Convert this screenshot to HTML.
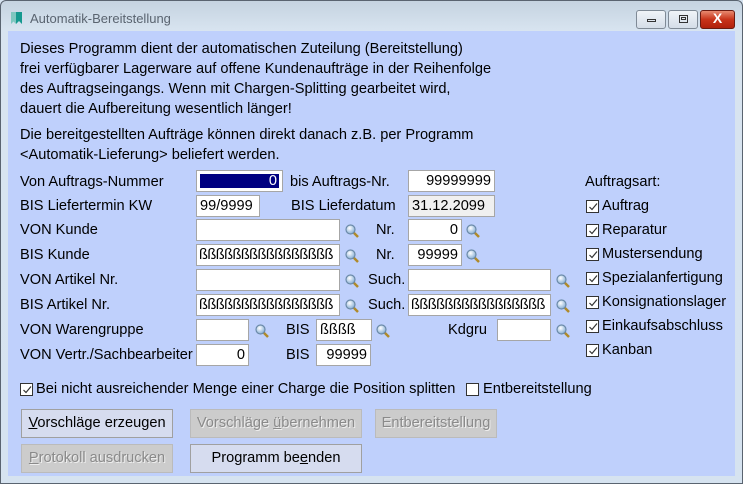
<!DOCTYPE html>
<html><head><meta charset="utf-8"><style>
*{box-sizing:border-box;margin:0;padding:0}
body{width:743px;height:484px;position:relative;overflow:hidden;background:#d6e3f0;font-family:"Liberation Sans",Arial,sans-serif;font-size:14.6px;color:#000}
.frame{position:absolute;left:0;top:0;width:743px;height:484px;border:1px solid #5a6470;border-radius:6px 6px 0 0;background:linear-gradient(#c5d3e0,#d8e4f0 30px,#d6e3f0)}
.panel{position:absolute;left:8px;top:31px;width:727px;height:445px;background:#bfd0fc}
.a{position:absolute;white-space:nowrap}
.t{line-height:20px}
.in{position:absolute;height:22px;background:#fff;border:1px solid #a6a6a6;line-height:20px;padding:0 3px;text-align:right;font-size:14.6px;white-space:nowrap;overflow:hidden}
.l{text-align:left}
.ss{padding:0 2px;letter-spacing:-0.55px}
.ic{position:absolute;width:14px;height:14px}
.cb{position:absolute;width:13px;height:13px;border:1px solid #333;background:#fff}
.cb svg{position:absolute;left:1px;top:1px}
.btn{position:absolute;height:29px;border:1px solid #a0a0a0;background:#d6dcef;text-align:center;line-height:27px;white-space:nowrap}
.dis{background:#cccccc;border-color:#bbb;color:#8a8a8a;text-shadow:1px 1px 0 #eee}
.wb{position:absolute;top:10px;width:30px;height:19px;border:1px solid #7f8a96;border-radius:3px;background:linear-gradient(#f0f4f8,#d4dde8)}
</style></head><body>
<div class="frame"></div>
<svg class="a" style="left:11px;top:12px" width="12" height="12"><path d="M0 0h5v12l-2.5-2.5L0 12z" fill="#7fc7c0"/><path d="M5 0h6v12l-3-3-3 3z" fill="#16998f"/></svg>
<div class="a" style="left:30px;top:11px;color:#5a6470;font-size:13px">Automatik-Bereitstellung</div>
<div class="wb" style="left:636px"><div style="position:absolute;left:10px;top:8px;width:9px;height:3px;border:1px solid #333"></div></div>
<div class="wb" style="left:668px"><div style="position:absolute;left:10px;top:4px;width:9px;height:8px;border:1px solid #333"></div><div style="position:absolute;left:12px;top:6px;width:5px;height:3px;border:1px solid #333"></div></div>
<div class="wb" style="left:700px;width:35px;border-color:#6b1a10;background:linear-gradient(#e88a70,#c8331a 50%,#b0200c)"><div style="position:absolute;left:0;width:100%;top:-1px;text-align:center;color:#fff;font-weight:bold;font-size:14px">X</div></div>
<div class="panel"></div>

<div class="a t" style="left:20px;top:39px">Dieses Programm dient der automatischen Zuteilung (Bereitstellung)<br>frei verfügbarer Lagerware auf offene Kundenaufträge in der Reihenfolge<br>des Auftragseingangs. Wenn mit Chargen-Splitting gearbeitet wird,<br>dauert die Aufbereitung wesentlich länger!</div>
<div class="a t" style="left:20px;top:125px">Die bereitgestellten Aufträge können direkt danach z.B. per Programm<br>&lt;Automatik-Lieferung&gt; beliefert werden.</div>

<div class="a" style="left:20px;top:174px">Von Auftrags-Nummer</div>
<div class="a" style="left:20px;top:198px">BIS Liefertermin KW</div>
<div class="a" style="left:20px;top:222px">VON Kunde</div>
<div class="a" style="left:20px;top:247px">BIS Kunde</div>
<div class="a" style="left:20px;top:272px">VON Artikel Nr.</div>
<div class="a" style="left:20px;top:297px">BIS Artikel Nr.</div>
<div class="a" style="left:20px;top:322px">VON Warengruppe</div>
<div class="a" style="left:20px;top:347px">VON Vertr./Sachbearbeiter</div>

<div class="in" style="left:196px;top:170px;width:87px;padding:0"><div style="position:absolute;left:3px;top:3px;right:3px;bottom:3px;background:#000080;color:#fff;line-height:14px;padding-right:2px">0</div></div>
<div class="a" style="left:290px;top:174px">bis Auftrags-Nr.</div>
<div class="in" style="left:408px;top:170px;width:87px">99999999</div>

<div class="in l" style="left:196px;top:195px;width:64px">99/9999</div>
<div class="a" style="left:291px;top:198px">BIS Lieferdatum</div>
<div class="in l" style="left:408px;top:195px;width:87px;background:#f0f0f0">31.12.2099</div>

<div class="in" style="left:196px;top:219px;width:144px"></div>
<div class="a" style="left:376px;top:222px">Nr.</div>
<div class="in" style="left:408px;top:219px;width:54px">0</div>

<div class="in l ss" style="left:196px;top:244px;width:144px">ßßßßßßßßßßßßßßßß</div>
<div class="a" style="left:376px;top:247px">Nr.</div>
<div class="in" style="left:408px;top:244px;width:54px">99999</div>

<div class="in" style="left:196px;top:269px;width:144px"></div>
<div class="a" style="left:368px;top:272px">Such.</div>
<div class="in" style="left:408px;top:269px;width:143px"></div>

<div class="in l ss" style="left:196px;top:294px;width:144px">ßßßßßßßßßßßßßßßß</div>
<div class="a" style="left:368px;top:297px">Such.</div>
<div class="in l ss" style="left:408px;top:294px;width:143px">ßßßßßßßßßßßßßßßß</div>

<div class="in" style="left:196px;top:319px;width:53px"></div>
<div class="a" style="left:286px;top:322px">BIS</div>
<div class="in l" style="left:316px;top:319px;width:56px">ßßßß</div>
<div class="a" style="left:448px;top:322px">Kdgru</div>
<div class="in" style="left:497px;top:319px;width:54px"></div>

<div class="in" style="left:196px;top:344px;width:53px">0</div>
<div class="a" style="left:286px;top:347px">BIS</div>
<div class="in" style="left:316px;top:344px;width:55px">99999</div>

<svg width="0" height="0" style="position:absolute"><defs><radialGradient id="g" cx="40%" cy="35%" r="60%"><stop offset="0" stop-color="#fff"/><stop offset="1" stop-color="#8fb4d8"/></radialGradient>
<symbol id="m" viewBox="0 0 14 14"><path d="M8 8l5 5" stroke="#b08a2a" stroke-width="2.5"/><circle cx="5.5" cy="5.5" r="4.5" fill="url(#g)" stroke="#6b8aa8" stroke-width="1.2"/></symbol></defs></svg>
<svg class="ic" style="left:345px;top:224px"><use href="#m"/></svg>
<svg class="ic" style="left:345px;top:249px"><use href="#m"/></svg>
<svg class="ic" style="left:345px;top:274px"><use href="#m"/></svg>
<svg class="ic" style="left:345px;top:299px"><use href="#m"/></svg>
<svg class="ic" style="left:466px;top:224px"><use href="#m"/></svg>
<svg class="ic" style="left:466px;top:249px"><use href="#m"/></svg>
<svg class="ic" style="left:556px;top:274px"><use href="#m"/></svg>
<svg class="ic" style="left:556px;top:299px"><use href="#m"/></svg>
<svg class="ic" style="left:255px;top:324px"><use href="#m"/></svg>
<svg class="ic" style="left:376px;top:324px"><use href="#m"/></svg>
<svg class="ic" style="left:556px;top:324px"><use href="#m"/></svg>

<div class="a" style="left:585px;top:174px">Auftragsart:</div>
<div class="cb" style="left:586px;top:200px"><svg width="10" height="10"><path d="M1.5 5l2.5 2.5 5-6" fill="none" stroke="#333" stroke-width="1.2"/></svg></div><div class="a" style="left:602px;top:198px">Auftrag</div>
<div class="cb" style="left:586px;top:224px"><svg width="10" height="10"><path d="M1.5 5l2.5 2.5 5-6" fill="none" stroke="#333" stroke-width="1.2"/></svg></div><div class="a" style="left:602px;top:222px">Reparatur</div>
<div class="cb" style="left:586px;top:248px"><svg width="10" height="10"><path d="M1.5 5l2.5 2.5 5-6" fill="none" stroke="#333" stroke-width="1.2"/></svg></div><div class="a" style="left:602px;top:246px">Mustersendung</div>
<div class="cb" style="left:586px;top:272px"><svg width="10" height="10"><path d="M1.5 5l2.5 2.5 5-6" fill="none" stroke="#333" stroke-width="1.2"/></svg></div><div class="a" style="left:602px;top:270px">Spezialanfertigung</div>
<div class="cb" style="left:586px;top:296px"><svg width="10" height="10"><path d="M1.5 5l2.5 2.5 5-6" fill="none" stroke="#333" stroke-width="1.2"/></svg></div><div class="a" style="left:602px;top:294px">Konsignationslager</div>
<div class="cb" style="left:586px;top:320px"><svg width="10" height="10"><path d="M1.5 5l2.5 2.5 5-6" fill="none" stroke="#333" stroke-width="1.2"/></svg></div><div class="a" style="left:602px;top:318px">Einkaufsabschluss</div>
<div class="cb" style="left:586px;top:344px"><svg width="10" height="10"><path d="M1.5 5l2.5 2.5 5-6" fill="none" stroke="#333" stroke-width="1.2"/></svg></div><div class="a" style="left:602px;top:342px">Kanban</div>

<div class="cb" style="left:20px;top:383px"><svg width="10" height="10"><path d="M1.5 5l2.5 2.5 5-6" fill="none" stroke="#333" stroke-width="1.2"/></svg></div><div class="a" style="left:36px;top:381px">Bei nicht ausreichender Menge einer Charge die Position splitten</div>
<div class="cb" style="left:466px;top:383px"></div><div class="a" style="left:483px;top:381px">Entbereitstellung</div>

<div class="btn" style="left:21px;top:409px;width:152px"><u>V</u>orschläge erzeugen</div>
<div class="btn dis" style="left:190px;top:409px;width:172px">Vorschläge <u>ü</u>bernehmen</div>
<div class="btn dis" style="left:375px;top:409px;width:122px">Entbereitstellung</div>
<div class="btn dis" style="left:21px;top:444px;width:152px"><u>P</u>rotokoll ausdrucken</div>
<div class="btn" style="left:190px;top:444px;width:172px">Programm be<u>e</u>nden</div>
</body></html>
